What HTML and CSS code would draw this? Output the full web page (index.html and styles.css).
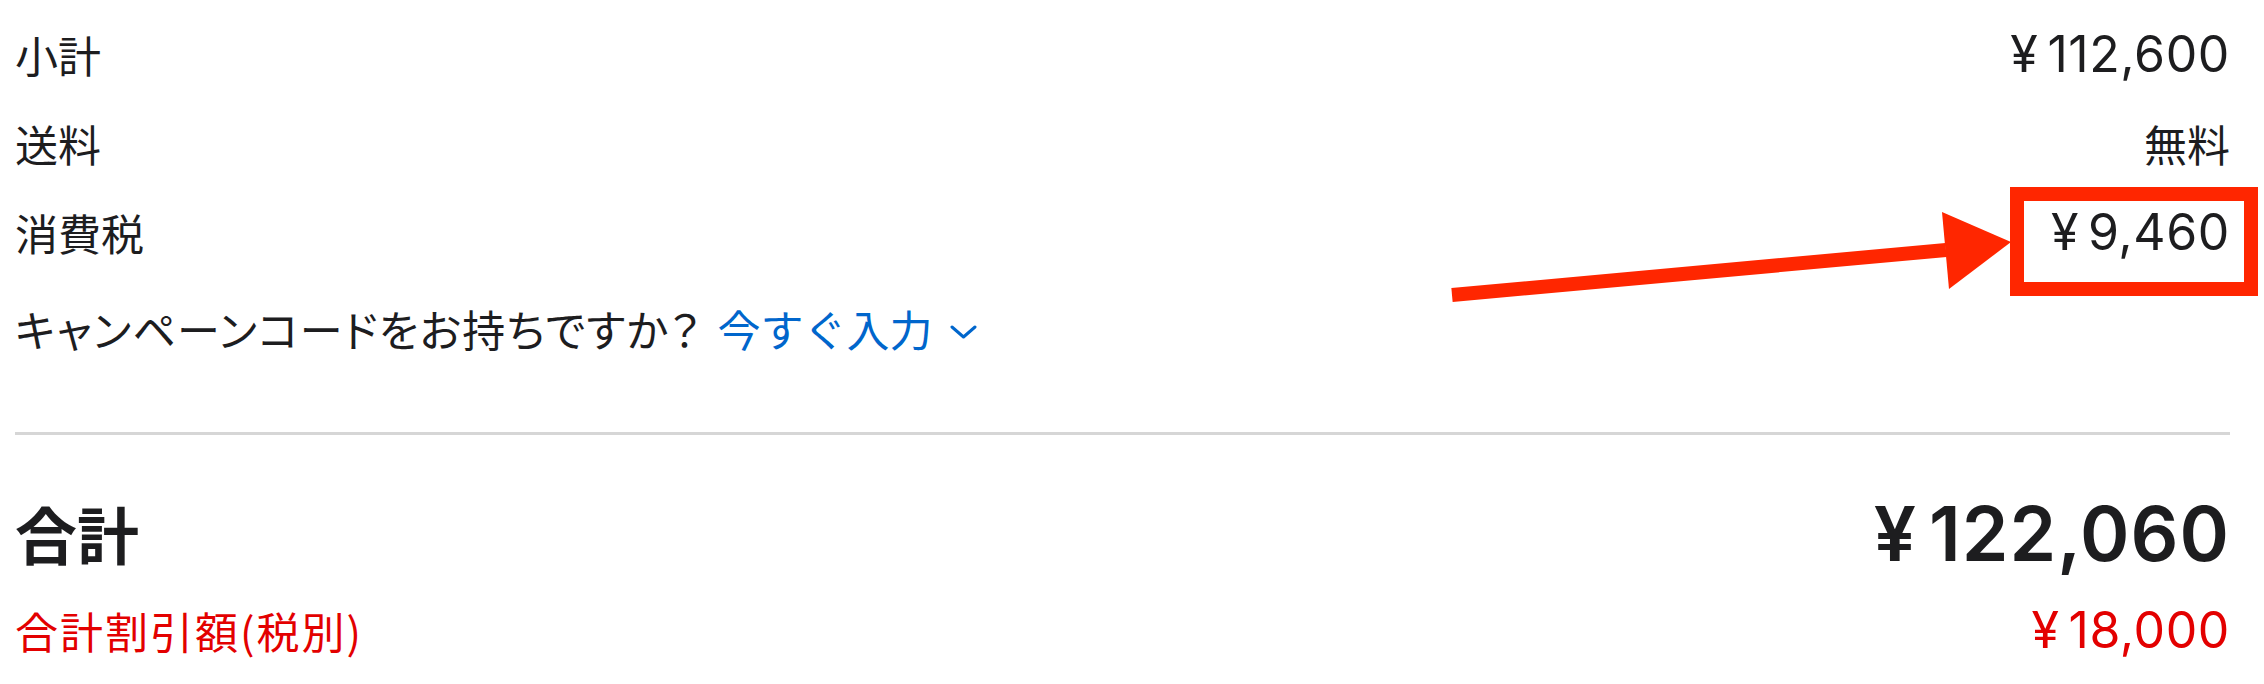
FILE: index.html
```html
<!DOCTYPE html>
<html lang="ja">
<head>
<meta charset="utf-8">
<title>注文概要</title>
<link rel="stylesheet" href="styles.css">
</head>
<body>
<div class="summary">
  <div class="row">
    <span class="label">小計</span>
    <span class="amount"><span class="yen">¥</span>112,600</span>
  </div>
  <div class="row">
    <span class="label">送料</span>
    <span class="label">無料</span>
  </div>
  <div class="row">
    <span class="label">消費税</span>
    <span class="amount"><span class="yen">¥</span>9,460</span>
  </div>
  <div class="row campaign">
    <span class="label question">キャンペーンコードをお持ちですか？</span>
    <a class="link" href="#">今すぐ入力<svg class="chevron" viewBox="0 0 27 14" width="27" height="14"><polyline points="2,2 13.5,12 25,2" fill="none" stroke="#0066cc" stroke-width="3" stroke-linecap="round" stroke-linejoin="round"/></svg></a>
  </div>
  <div class="divider"></div>
  <div class="row total">
    <span class="label">合計</span>
    <span class="amount"><span class="yen">¥</span>122,060</span>
  </div>
  <div class="row discount">
    <span class="label discount-label">合計割引額(税別)</span>
    <span class="amount"><span class="yen">¥</span>18,000</span>
  </div>
</div>
<svg class="annotation" width="2264" height="684" viewBox="0 0 2264 684">
  <line x1="1452" y1="295" x2="1946" y2="250" stroke="#ff2600" stroke-width="14"/>
  <polygon points="1942,212 1949,289 2011,242" fill="#ff2600"/>
  <rect x="2017" y="194" width="234" height="95" fill="none" stroke="#ff2600" stroke-width="14"/>
</svg>
</body>
</html>
```

FILE: styles.css
```css
html, body {
  margin: 0;
  padding: 0;
  background: #ffffff;
}

body {
  width: 2264px;
  height: 684px;
  position: relative;
  overflow: hidden;
  color: #1d1d1f;
  font-family: "Noto Sans CJK JP", "Liberation Sans", sans-serif;
}

.summary {
  padding: 10px 34px 0 15px;
  display: flex;
  flex-direction: column;
}

.row {
  display: flex;
  justify-content: space-between;
  align-items: center;
  height: 89px;
}

.label {
  font-size: 43px;
  line-height: 89px;
}

.amount {
  font-family: "Inter", "Liberation Sans", sans-serif;
  font-size: 50px;
  line-height: 89px;
  letter-spacing: 0.6px;
}

.yen {
  margin-right: 9px;
}

.campaign {
  justify-content: flex-start;
  gap: 16px;
  margin-top: 7px;
}

.question {
  font-feature-settings: "palt";
  letter-spacing: 1.2px;
}

.link {
  display: flex;
  align-items: center;
  color: #0066cc;
  text-decoration: none;
  font-size: 43px;
  line-height: 89px;
}

.chevron {
  margin-left: 18px;
  margin-top: 6px;
}

.divider {
  margin-top: 59px;
  height: 3px;
  background: #d6d6d6;
}

.total {
  margin-top: 54px;
  font-weight: 700;
}

.total .label {
  font-size: 62px;
}

.total .amount {
  font-size: 75px;
  font-weight: 600;
  letter-spacing: 1px;
}

.total .yen {
  margin-right: 12px;
}

.discount {
  margin-top: 8px;
  color: #e30000;
}

.discount-label {
  letter-spacing: 2px;
}

.annotation {
  position: absolute;
  top: 0;
  left: 0;
  pointer-events: none;
}
```
